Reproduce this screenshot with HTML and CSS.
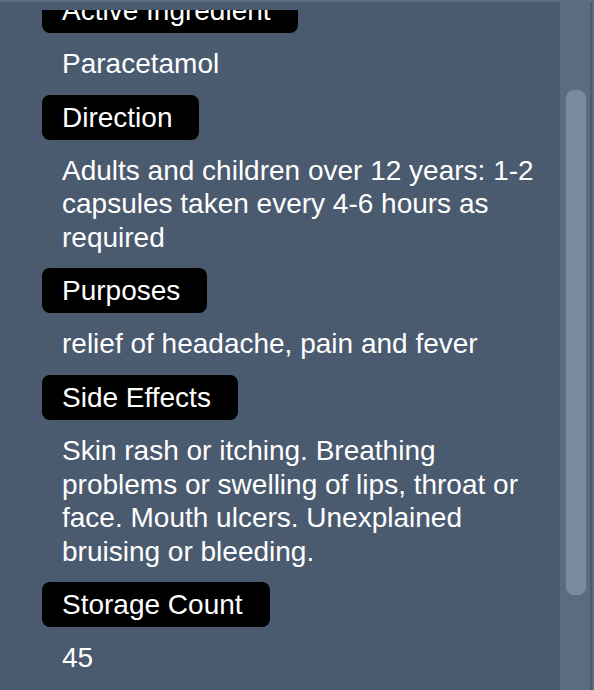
FILE: index.html
```html
<!DOCTYPE html>
<html>
<head>
<meta charset="utf-8">
<link rel="stylesheet" href="styles.css">
</head>
<body>
<div class="panel">
  <div class="main">
    <div class="clip">
      <div class="content">
        <div class="label">Active Ingredient</div>
        <div class="text">Paracetamol</div>
        <div class="label">Direction</div>
        <div class="text">Adults and children over 12 years: 1-2 capsules taken every 4-6 hours as required</div>
        <div class="label">Purposes</div>
        <div class="text">relief of headache, pain and fever</div>
        <div class="label">Side Effects</div>
        <div class="text">Skin rash or itching. Breathing problems or swelling of lips, throat or face. Mouth ulcers. Unexplained bruising or bleeding.</div>
        <div class="label">Storage Count</div>
        <div class="text">45</div>
      </div>
    </div>
  </div>
  <div class="scrollbar">
    <div class="track"><div class="thumb"></div></div>
    <div class="edge-dark"></div>
    <div class="edge-light"></div>
  </div>
</div>
</body>
</html>
```

FILE: styles.css
```css
html, body {
  margin: 0;
  padding: 0;
  background: #4a5a6f;
  overflow: hidden;
}
.panel {
  display: flex;
  height: 690px;
  box-sizing: border-box;
  border-top: 2px solid #5d6d82;
  font-family: "Liberation Sans", Arial, sans-serif;
  color: #ffffff;
}
.main {
  flex: 1;
  display: flex;
  flex-direction: column;
  padding-top: 8px;
  min-width: 0;
}
.clip {
  flex: 1;
  overflow: hidden;
}
.content {
  margin-top: -22px;
  display: flex;
  flex-direction: column;
  align-items: flex-start;
}
.label {
  margin-left: 42px;
  background: #000000;
  border-radius: 8px;
  font-size: 28px;
  line-height: 46px;
  height: 45px;
  padding: 0 27px 0 20px;
  white-space: nowrap;
}
.text {
  box-sizing: border-box;
  width: 100%;
  padding: 0 10px 0 62px;
  margin: 14px 0;
  font-size: 28px;
  line-height: 33.6px;
}
.scrollbar {
  display: flex;
  flex: none;
}
.track {
  width: 30px;
  background: #5b6b80;
  padding: 88px 4px 0 6px;
  box-sizing: border-box;
}
.thumb {
  width: 20px;
  height: 505px;
  background: #7b8a9c;
  border-radius: 8px;
}
.edge-dark {
  width: 2px;
  background: #4a5a6f;
}
.edge-light {
  width: 2px;
  background: #5b6b80;
}
```
